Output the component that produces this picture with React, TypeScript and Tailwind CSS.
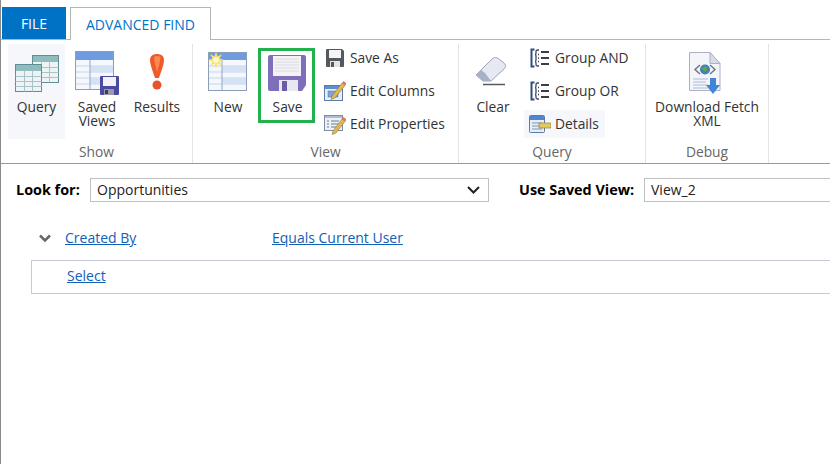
import React from 'react';

function QueryIcon() {
  const grid = (x: number, y: number) => (
    <g>
      <rect x={x} y={y} width="26" height="27" fill="#eef3f5" stroke="#5f8f94" />
      <rect x={x + 0.5} y={y + 0.5} width="25" height="6" fill="#8fbdbd" />
      <path d={`M${x} ${y + 12}h26M${x} ${y + 17}h26M${x} ${y + 22}h26M${x + 9} ${y + 6}v21M${x + 17} ${y + 6}v21`} stroke="#a9c4c8" fill="none" />
    </g>
  );
  return (
    <svg width="44" height="38" viewBox="0 0 44 38">
      {grid(17.5, 0.5)}
      {grid(0.5, 9.5)}
    </svg>
  );
}

function TableIcon({ star }: { star?: boolean }) {
  return (
    <svg width="40" height="40" viewBox="0 0 40 40">
      <rect x="0.5" y="0.5" width="38" height="38" fill="#f4f7fc" stroke="#8c9db8" />
      <rect x="1" y="1" width="37" height="7" fill="#6f9ce0" />
      <path d="M1 14h37M1 20h37M1 26h37M1 32h37" stroke="#c5d5ee" strokeWidth="1" />
      <rect x="14" y="14" width="24" height="6" fill="#d5e1f4" />
      <rect x="14" y="26" width="24" height="6" fill="#d5e1f4" />
      <path d="M14 8v30" stroke="#8fa6c8" />
      {star && (
        <g>
          <path d="M8 0l1.600 4.500L14 2l-2.500 4.500L16 8l-4.500 1.600L14 14l-4.400-2.500L8 16l-1.600-4.500L2 14l2.500-4.400L0 8l4.500-1.500L2 2l4.400 2.500z" fill="#fbe26a" />
          <circle cx="8" cy="8" r="3" fill="#fff8c8" />
        </g>
      )}
    </svg>
  );
}

function SavedViewsIcon() {
  return (
    <svg width="44" height="44" viewBox="0 0 44 44">
      <rect x="0.5" y="0.5" width="38" height="38" fill="#f4f7fc" stroke="#8c9db8" />
      <rect x="1" y="1" width="37" height="8" fill="#6f9ce0" />
      <path d="M1 15h37M1 21h37M1 27h37M1 33h37" stroke="#c5d5ee" />
      <rect x="15" y="15" width="23" height="6" fill="#d5e1f4" />
      <rect x="15" y="27" width="23" height="6" fill="#d5e1f4" />
      <path d="M15 9v29" stroke="#8fa6c8" />
      <rect x="25" y="25" width="19" height="19" rx="1" fill="#4a4aa0" />
      <rect x="28" y="26" width="13" height="9" fill="#f2f2f8" />
      <rect x="29" y="38" width="10" height="6" fill="#9a9aa8" />
      <rect x="30" y="39" width="3" height="4" fill="#3a3a70" />
    </svg>
  );
}

function BangIcon() {
  return (
    <svg width="18" height="38" viewBox="0 0 18 38">
      <path d="M9 1c4 0 7 2 7 6 0 5-3.500 13-5 18H7C5.500 20 2 12 2 7c0-4 3-6 7-6z" fill="#ef5a28" />
      <path d="M6 4c2-1.500 5-1.500 6.500 0 0 4-2 10-3.500 15C8 14 6 8 6 4z" fill="#f88a55" />
      <circle cx="9" cy="32" r="4.500" fill="#e8552a" />
    </svg>
  );
}

function FloppyIcon() {
  return (
    <svg width="38" height="36" viewBox="0 0 38 36">
      <path d="M0 2a2 2 0 0 1 2-2h34a2 2 0 0 1 2 2v28l-4 6H2a2 2 0 0 1-2-2z" fill="#7f6fba" />
      <rect x="5" y="1" width="28" height="20" fill="#f3f2f5" />
      <path d="M7 4h24M7 7h24M7 10h24M7 13h24M7 16h24" stroke="#dcdce2" />
      <rect x="11" y="25" width="19" height="11" fill="#e9e8ef" />
      <rect x="14" y="26" width="5" height="10" fill="#6a5ca5" />
    </svg>
  );
}

function SaveAsIcon() {
  return (
    <svg width="20" height="20" viewBox="0 0 20 20">
      <path d="M1 2a1 1 0 0 1 1-1h15l2 2v15a1 1 0 0 1-1 1H2a1 1 0 0 1-1-1z" fill="#55595e" />
      <rect x="4" y="2" width="12" height="8" fill="#f4f4f4" />
      <rect x="5" y="13" width="10" height="6" fill="#e4e4e4" />
      <rect x="6" y="14" width="3" height="5" fill="#55595e" />
    </svg>
  );
}

function EditColumnsIcon() {
  return (
    <svg width="22" height="22" viewBox="0 0 22 22">
      <rect x="0.5" y="5.500" width="18" height="15" fill="#e6eef8" stroke="#5b7ba6" />
      <rect x="1" y="6" width="17" height="3" fill="#5f8fd0" />
      <rect x="4" y="11" width="10" height="6" fill="#7ea4d6" stroke="#4d6e9c" strokeWidth="0.500" />
      <path d="M8 16l10-13 3 2.500L11 18l-4 1.500z" fill="#e2b650" stroke="#7a6a40" strokeWidth="0.500" />
      <path d="M18 3l1.500-2 3 2.500L21 5.500z" fill="#d87a60" />
    </svg>
  );
}

function EditPropsIcon() {
  return (
    <svg width="22" height="22" viewBox="0 0 22 22">
      <rect x="0.5" y="2.500" width="18" height="15" fill="#eef1f6" stroke="#7d8ba3" />
      <rect x="1" y="3" width="17" height="2" fill="#aebbd0" />
      <path d="M3 8h2M3 11h2M3 14h2M7 8h8M7 11h8M7 14h6" stroke="#6a7a94" />
      <path d="M9 18l9-12 3 2.500L12 20l-4 1.500z" fill="#e2b650" stroke="#7a6a40" strokeWidth="0.500" />
      <path d="M18 6l1.500-2 3 2.500L21 8.500z" fill="#d87a60" />
    </svg>
  );
}

function EraserIcon() {
  return (
    <svg width="32" height="30" viewBox="0 0 32 30" className="mr-[5px]">
      <path d="M1 19L17 3c2-2 5-2 7 0l5 4c2 2 2 4 0 6L16 25H8z" fill="#e6e9f1" stroke="#9aa3b5" />
      <path d="M1 19l7 6h8l-6-8-4-3z" fill="#a7b2c8" />
      <path d="M8 28.500h22" stroke="#55585e" strokeWidth="1.500" />
    </svg>
  );
}

function GroupIcon() {
  return (
    <svg width="20" height="20" viewBox="0 0 20 20" fill="none">
      <path d="M4.500 1.500H1.500v17h3" stroke="#2f4f7f" strokeWidth="2" />
      <path d="M9 2H7.500C6.500 2 6 2.500 6 3.500V5c0 .8-.5 1.500-1 1.500.5 0 1 .7 1 1.500v4c0 .8-.5 1.500-1 1.500.5 0 1 .7 1 1.500v1.500c0 1 .5 1.500 1.500 1.500H9" stroke="#3a4a60" strokeWidth="1.300" />
      <path d="M11 4h8M11 10h8M11 16h8" stroke="#3a3f47" strokeWidth="2" />
      <path d="M8 6.500h1M8 10h1M8 13.500h1" stroke="#3a3f47" strokeWidth="1.300" />
    </svg>
  );
}

function DetailsIcon() {
  return (
    <svg width="22" height="18" viewBox="0 0 22 18">
      <rect x="0.5" y="0.5" width="15" height="17" rx="1" fill="#e6eef8" stroke="#5b7ba6" />
      <rect x="1" y="1" width="14" height="4" fill="#4f86cf" />
      <path d="M3 8h10M3 11h7M3 14h10" stroke="#7d97bd" />
      <rect x="10" y="8" width="12" height="5" fill="#e3c95c" stroke="#8f7f3a" strokeWidth="0.700" />
    </svg>
  );
}

function XmlDocIcon() {
  return (
    <svg width="38" height="44" viewBox="0 0 38 44">
      <path d="M1.500 0.500H22l10 11v27H1.500z" fill="#f3f5fa" stroke="#aab2c2" />
      <path d="M22 0.500v11h10z" fill="#d7dde8" stroke="#aab2c2" />
      <path d="M12 13l-5 4.500 5 4.500M22 13l5 4.500-5 4.500" stroke="#6f7785" strokeWidth="1.500" fill="none" />
      <circle cx="17" cy="17.500" r="5" fill="#3f7fc4" />
      <path d="M14 16c2-2 4-2 5 0s-2 5-3 3-3-1-2-3z" fill="#62a83f" />
      <path d="M5 27h15M5 30h13M5 33h15M5 36h15" stroke="#a9bbd8" />
      <path d="M22 26h6v7h4l-7 9-7-9h4z" fill="#3f86d8" />
    </svg>
  );
}

function LargeButton({ icon, label, width, iconPad, active }: { icon: React.ReactNode; label: string; width: string; iconPad: string; active?: boolean }) {
  return (
    <div className={`${width} flex flex-col items-center h-[95px] ${active ? 'bg-[#f5f7fa]' : ''}`}>
      <div className={`h-[56px] flex items-end justify-center ${iconPad}`}>{icon}</div>
      <div className="text-center text-[13.8px] leading-[14px] text-[#333] whitespace-pre-line">{label}</div>
    </div>
  );
}

function SmallButton({ icon, label, active }: { icon: React.ReactNode; label: string; active?: boolean }) {
  return (
    <div className={`flex items-center w-fit h-[28px] gap-[4px] pr-[6px] ${active ? 'bg-[#f5f7fa] ml-[-5px] pl-[5px]' : ''}`}>
      <div className="w-[22px] flex justify-center shrink-0">{icon}</div>
      <span className="text-[13.8px] text-[#333] whitespace-nowrap">{label}</span>
    </div>
  );
}

function Group({ title, width, children }: { title: string; width: string; children: React.ReactNode }) {
  return (
    <div className={`${width} shrink-0 flex flex-col border-r border-[#e2e3e5]`}>
      <div className="h-[95px] flex">{children}</div>
      <div className="text-center text-[13.8px] leading-[18px] text-[#666] mt-[4px]">{title}</div>
    </div>
  );
}

export default function App() {
  return (
    <div className="w-[830px] h-[464px] bg-white overflow-hidden border-l border-[#8a8a8a] text-[#222]" style={{ fontFamily: '"Open Sans", "Noto Sans", sans-serif' }}>
      {/* tabs */}
      <div className="flex h-[40px] items-end pl-[1px] pt-[7px] border-b border-[#b5b5b5]">
        <div className="w-[64px] h-[32px] bg-[#0072c6] text-white text-[14px] flex items-center justify-center">FILE</div>
        <div className="w-[141px] h-[33px] ml-[4px] mb-[-1px] bg-white border border-b-0 border-[#b5b5b5] text-[#0072c6] text-[14px] flex items-center justify-center">ADVANCED FIND</div>
      </div>

      {/* ribbon */}
      <div className="flex h-[124px] pt-[4px] border-b border-[#9a9a9a]">
        <Group title="Show" width="w-[192px]">
          <div className="flex pl-[7px]">
            <LargeButton width="w-[57px]" iconPad="pb-[7px]" active icon={<QueryIcon />} label="Query" />
            <LargeButton width="w-[64px]" iconPad="pb-[5px]" icon={<SavedViewsIcon />} label={'Saved\nViews'} />
            <LargeButton width="w-[56px]" iconPad="pb-[9px]" icon={<BangIcon />} label="Results" />
          </div>
        </Group>
        <Group title="View" width="w-[266px]">
          <div className="flex pl-[12px]">
            <LargeButton width="w-[46px]" iconPad="pb-[8px]" icon={<TableIcon star />} label="New" />
            <div className="w-[57px] h-[75px] ml-[7px] mt-[4px] border-[3px] border-[#22b14c] flex flex-col items-center">
              <div className="h-[40px] flex items-end"><FloppyIcon /></div>
              <div className="text-[13.8px] leading-[14px] text-[#333] mt-[9px] pl-[2px]">Save</div>
            </div>
            <div className="flex flex-col ml-[9px]">
              <SmallButton icon={<SaveAsIcon />} label="Save As" />
              <div className="mt-[5px]"><SmallButton icon={<EditColumnsIcon />} label="Edit Columns" /></div>
              <div className="mt-[5px]"><SmallButton icon={<EditPropsIcon />} label="Edit Properties" /></div>
            </div>
          </div>
        </Group>
        <Group title="Query" width="w-[187px]">
          <div className="flex pl-[11px]">
            <LargeButton width="w-[46px]" iconPad="pb-[14px]" icon={<EraserIcon />} label="Clear" />
            <div className="flex flex-col ml-[13px]">
              <SmallButton icon={<GroupIcon />} label="Group AND" />
              <div className="mt-[5px]"><SmallButton icon={<GroupIcon />} label="Group OR" /></div>
              <div className="mt-[5px]"><SmallButton active icon={<DetailsIcon />} label="Details" /></div>
            </div>
          </div>
        </Group>
        <Group title="Debug" width="w-[123px]">
          <LargeButton width="w-full" iconPad="pb-[4px]" icon={<XmlDocIcon />} label={'Download Fetch\nXML'} />
        </Group>
      </div>

      {/* look for row */}
      <div className="flex items-center h-[24px] mt-[14px] pl-[15px]">
        <span className="w-[74px] shrink-0 font-bold text-[14.400px] text-black pb-[1px]">Look for:</span>
        <div className="w-[399px] h-[24px] shrink-0 border border-[#c0c0c0] flex items-center justify-between pl-[6px] pr-[8px] text-[14px] text-[#222]">
          <span className="pb-[1px]">Opportunities</span>
          <svg width="13" height="8" viewBox="0 0 13 8" fill="none"><path d="M1 1l5.500 5.500L12 1" stroke="#222" strokeWidth="2" /></svg>
        </div>
        <span className="ml-[30px] w-[125px] shrink-0 font-bold text-[14.400px] text-black whitespace-nowrap pb-[1px]">Use Saved View:</span>
        <div className="w-[200px] h-[24px] shrink-0 border border-[#c0c0c0] flex items-center pl-[6px] text-[14px] text-[#222]">
          <span className="pb-[1px]">View_2</span>
        </div>
      </div>

      {/* criteria */}
      <div className="flex items-center h-[20px] mt-[26px] pl-[38px] text-[14px] text-[#1160b7]">
        <svg width="12" height="9" viewBox="0 0 12 9" fill="none" className="shrink-0"><path d="M1 1.500l5 5 5-5" stroke="#666" strokeWidth="2.500" /></svg>
        <a className="underline ml-[14px] w-[207px] shrink-0 pb-[2px]">Created By</a>
        <a className="underline whitespace-nowrap pb-[2px]">Equals Current User</a>
      </div>
      <div className="h-[34px] mt-[12px] ml-[30px] w-[820px] border border-[#c5cbd6] flex items-center pl-[35px] pb-[4px] text-[14px] text-[#1160b7]">
        <a className="underline">Select</a>
      </div>
    </div>
  );
}
